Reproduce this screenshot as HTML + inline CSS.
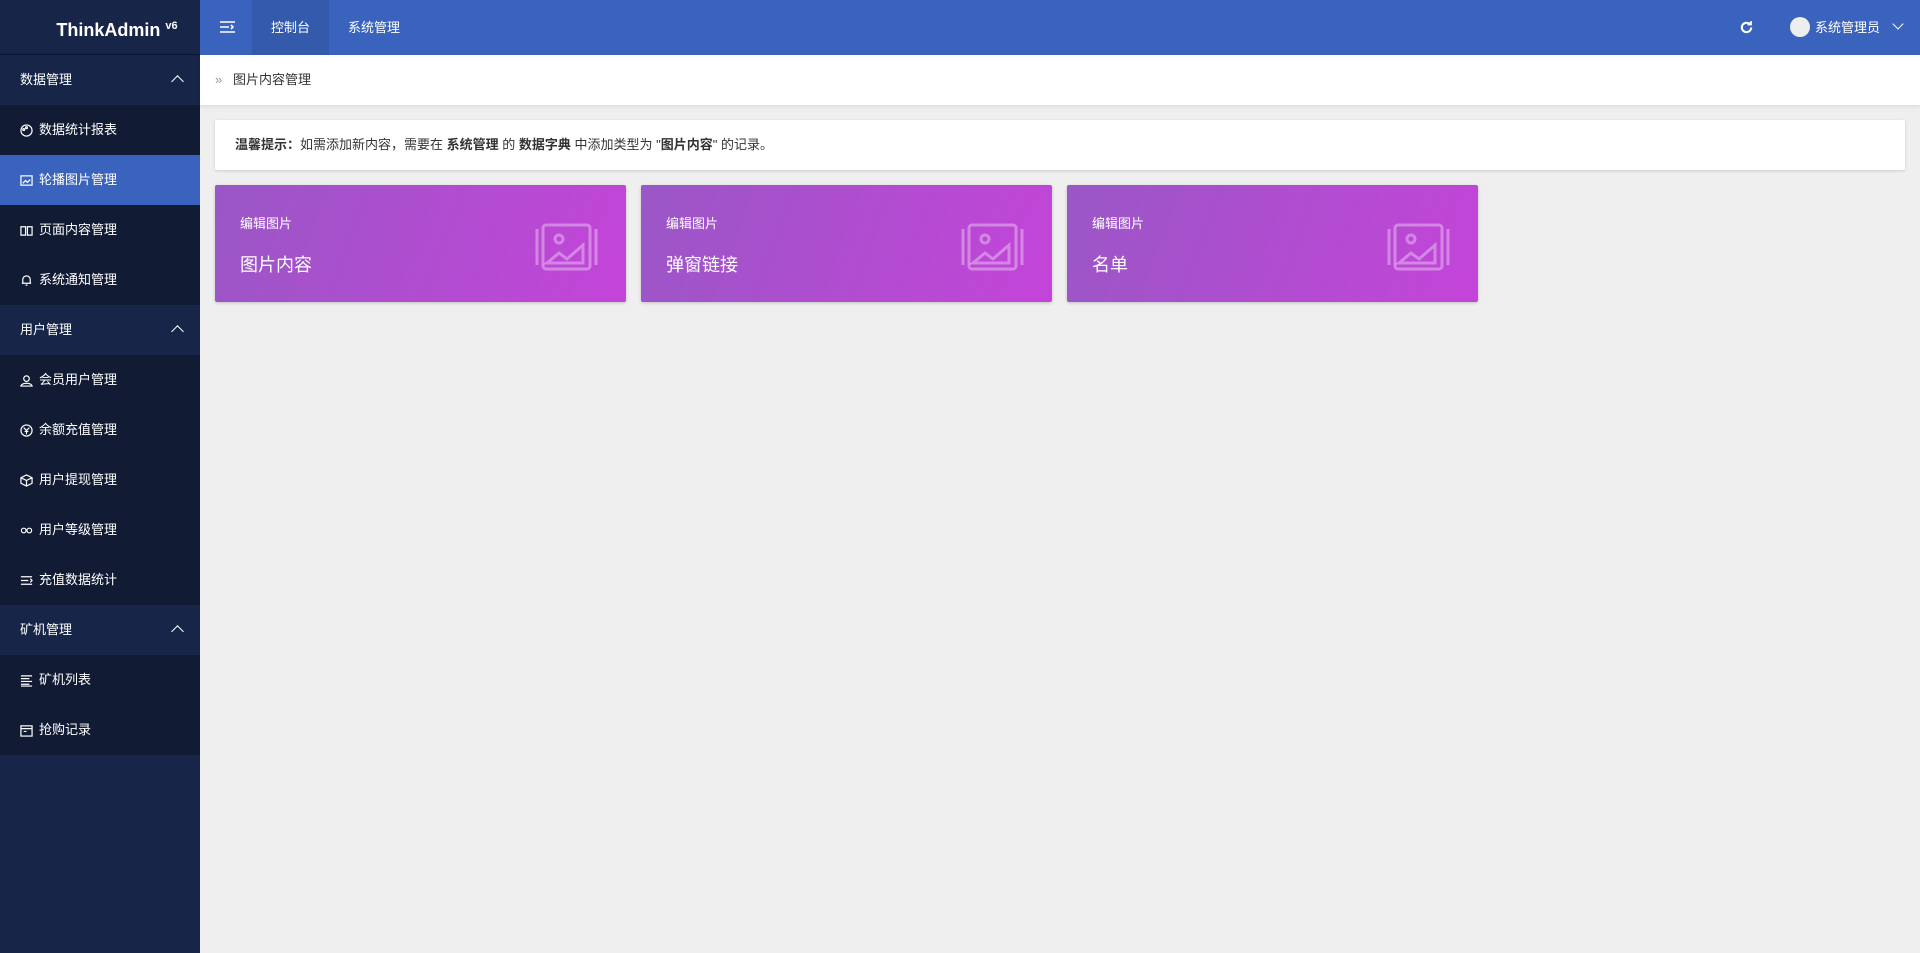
<!DOCTYPE html>
<html><head><meta charset="utf-8"><style>
*{margin:0;padding:0;box-sizing:border-box}
body{width:1920px;height:953px;overflow:hidden;background:#efefef;font-family:"Liberation Sans","Noto Sans CJK SC",sans-serif;font-size:13px;color:#333;position:relative}
.side{position:absolute;left:0;top:0;width:200px;height:953px;background:#172548;color:#fff}
.logo{height:55px;line-height:52px;text-align:center;font-weight:bold;font-size:18px;padding-left:34px;border-bottom:1px solid #0d1630}
.logo sup{font-size:11px}
.grp{height:50px;line-height:50px;padding-left:20px;font-size:13px;position:relative;background:#172548}
.grp:after{content:"";position:absolute;right:18px;top:22px;width:8px;height:8px;border-left:1.6px solid #fff;border-top:1.6px solid #fff;transform:rotate(45deg)}
.it{height:50px;line-height:50px;padding-left:20px;background:#111b34;font-size:13px;display:flex;align-items:center}
.it.on{background:#3963bc}
.it svg{width:13px;height:13px;margin-right:6px;fill:none;stroke:#fff;stroke-width:1.3}
.top{position:absolute;left:200px;top:0;right:0;height:55px;background:#3963bc;color:#fff}
.tab{position:absolute;top:0;height:55px;line-height:55px;font-size:13px}
.crumb{position:absolute;left:200px;right:0;top:55px;height:50px;background:#fff;line-height:50px;padding-left:33px;font-size:13px;box-shadow:0 2px 4px rgba(0,0,0,.08)}
.tip{position:absolute;left:215px;width:1690px;top:120px;height:50px;background:#fff;line-height:50px;padding-left:20px;font-size:13px;box-shadow:0 1px 3px rgba(0,0,0,.15);border-radius:2px}
.tip b{font-size:13px}
.card{position:absolute;top:185px;width:411px;height:117px;background:linear-gradient(110deg,#9a57c6,#c444d9);color:#fff;border-radius:2px;box-shadow:0 1px 3px rgba(0,0,0,.2)}
.card .a{position:absolute;left:25px;top:28px;font-size:13px}
.card .b{position:absolute;left:25px;top:66px;font-size:18px}
.card svg{position:absolute;right:28px;top:38px;width:63px;height:48px;fill:none;stroke:rgba(255,255,255,.35);stroke-width:3}
</style></head><body>
<div class="side">
<div class="logo">ThinkAdmin <sup>v6</sup></div>
<div class="grp">数据管理</div>
<div class="it"><svg viewBox="0 0 14 14"><circle cx="7" cy="7" r="6"/><circle cx="4" cy="6" r="1"/><circle cx="7" cy="4" r="1"/></svg>数据统计报表</div>
<div class="it on"><svg viewBox="0 0 14 14"><rect x="1" y="2" width="12" height="10"/><path d="M3 10l3-3 2 2 3-3"/></svg>轮播图片管理</div>
<div class="it"><svg viewBox="0 0 14 14"><path d="M1 3h5v9H1zM8 3h5v9H8z"/></svg>页面内容管理</div>
<div class="it"><svg viewBox="0 0 14 14"><path d="M3 10V6a4 4 0 018 0v4h1H2zM6 12h2"/></svg>系统通知管理</div>
<div class="grp">用户管理</div>
<div class="it"><svg viewBox="0 0 14 14"><circle cx="7" cy="5" r="3"/><path d="M1 13c1-4 11-4 12 0z"/></svg>会员用户管理</div>
<div class="it"><svg viewBox="0 0 14 14"><circle cx="7" cy="7" r="6"/><path d="M4 4l3 3 3-3M7 7v4M5 8h4"/></svg>余额充值管理</div>
<div class="it"><svg viewBox="0 0 14 14"><path d="M7 1l6 3v6l-6 3-6-3V4zM7 7v6M1 4l6 3 6-3"/></svg>用户提现管理</div>
<div class="it"><svg viewBox="0 0 14 14"><circle cx="4" cy="7" r="2.5"/><circle cx="10" cy="7" r="2.5"/></svg>用户等级管理</div>
<div class="it"><svg viewBox="0 0 14 14"><path d="M1 3h12M1 7h8M1 11h12M11 5l2 2-2 2"/></svg>充值数据统计</div>
<div class="grp">矿机管理</div>
<div class="it"><svg viewBox="0 0 14 14"><path d="M1 2h12M1 5h9M1 8h12M1 11h9M1 13h12"/></svg>矿机列表</div>
<div class="it"><svg viewBox="0 0 14 14"><rect x="1" y="2" width="12" height="11"/><path d="M1 5h12M4 8h3"/></svg>抢购记录</div>
</div>
<div class="top">
<svg style="position:absolute;left:20px;top:20px" width="15" height="14" viewBox="0 0 15 14" fill="none" stroke="#fff" stroke-width="1.6"><path d="M0 2h15M0 7h9M0 12h15M11 5l2 2-2 2"/></svg>
<div class="tab" style="left:52px;width:77px;background:#335aab;text-align:center">控制台</div>
<div class="tab" style="left:148px">系统管理</div>
<svg style="position:absolute;left:1539px;top:20px" width="15" height="15" viewBox="0 0 16 16" fill="none" stroke="#fff" stroke-width="2.2"><path d="M13 8a5 5 0 11-1.5-3.6"/><path d="M13 1v4H9" fill="#fff" stroke-width="1.5"/></svg>
<div style="position:absolute;left:1590px;top:17px;width:20px;height:20px;border-radius:50%;background:#eee"></div>
<div class="tab" style="left:1615px;font-size:13px">系统管理员</div>
<div style="position:absolute;left:1694px;top:20px;width:8px;height:8px;border-right:1.4px solid #fff;border-bottom:1.4px solid #fff;transform:rotate(45deg)"></div>
</div>
<div class="crumb"><span style="color:#999;position:absolute;left:15px">»</span>图片内容管理</div>
<div class="tip"><b>温馨提示：</b>如需添加新内容，需要在 <b>系统管理</b> 的 <b>数据字典</b> 中添加类型为 "<b>图片内容</b>" 的记录。</div>
<div class="card" style="left:215px"><div class="a">编辑图片</div><div class="b">图片内容</div><svg viewBox="0 0 63 48"><rect x="8" y="2" width="47" height="44" rx="3"/><path d="M2 6v36M61 6v36"/><circle cx="24" cy="16" r="4"/><path d="M12 40l12-10 8 6 16-14v18z"/></svg></div>
<div class="card" style="left:641px"><div class="a">编辑图片</div><div class="b">弹窗链接</div><svg viewBox="0 0 63 48"><rect x="8" y="2" width="47" height="44" rx="3"/><path d="M2 6v36M61 6v36"/><circle cx="24" cy="16" r="4"/><path d="M12 40l12-10 8 6 16-14v18z"/></svg></div>
<div class="card" style="left:1067px"><div class="a">编辑图片</div><div class="b">名单</div><svg viewBox="0 0 63 48"><rect x="8" y="2" width="47" height="44" rx="3"/><path d="M2 6v36M61 6v36"/><circle cx="24" cy="16" r="4"/><path d="M12 40l12-10 8 6 16-14v18z"/></svg></div>
</body></html>
